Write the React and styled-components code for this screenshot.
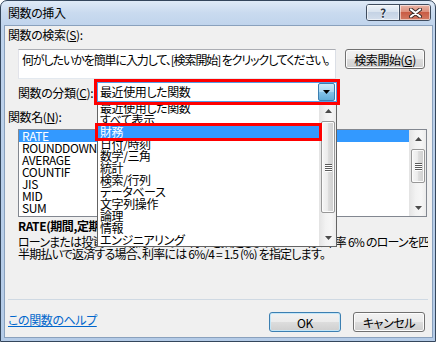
import React from "react";
import styled, { createGlobalStyle, css } from "styled-components";

const GlobalStyle = createGlobalStyle`
  html, body { margin: 0; padding: 0; background: #fff; }
  body {
    font-family: "Noto Sans CJK JP", "Noto Sans", sans-serif;
    font-size: 12px;
    color: #000;
    font-feature-settings: "palt";
    letter-spacing: -0.4px;
  }
  * { box-sizing: border-box; }
`;

const Window = styled.div`
  width: 436px;
  height: 342px;
  border: 1px solid #34465c;
  border-radius: 7px 7px 0 0;
  background: linear-gradient(180deg, #dfeaf7 0px, #c9daef 12px, #bfd3ec 26px, #b4cbe7 100%);
  padding: 0 2px 3px 3px;
  display: flex;
  flex-direction: column;
  overflow: hidden;
`;

const TitleBar = styled.div`
  height: 24px;
  flex: none;
  display: flex;
  align-items: flex-start;
  justify-content: space-between;
  padding: 3px 2px 0 4px;
`;

const Title = styled.div`
  line-height: 18px;
  white-space: nowrap;
`;

const CaptionGroup = styled.div`
  display: flex;
  height: 17px;
  border: 1px solid #3f4c5e;
  border-radius: 3px;
  overflow: hidden;
`;

const CaptionButton = styled.div`
  width: ${(p) => p.$w}px;
  height: 100%;
  display: flex;
  align-items: center;
  justify-content: center;
  box-shadow: inset 0 0 0 1px rgba(255, 255, 255, 0.55);
  font-weight: bold;
  font-size: 12px;
  line-height: 15px;
  color: #2c3849;
  text-shadow: 0 0 1px #fff, 0 1px 0 #fff;
  ${(p) =>
    p.$kind === "close"
      ? css`
          background: linear-gradient(180deg, #eab5a7 0%, #dc8f7c 45%, #c95c45 50%, #d27a63 100%);
          border-left: 1px solid #3f4c5e;
        `
      : css`
          background: linear-gradient(180deg, #eef3f9 0%, #d9e3ef 45%, #c5d3e5 50%, #d3deec 100%);
        `}
`;

const Client = styled.div`
  flex: 1;
  border: 1px solid #8aa1bd;
  background: #f0f0f0;
  padding: 2px 4px 5px 3px;
  display: flex;
  flex-direction: column;
  min-height: 0;
`;

const Label = styled.div`
  line-height: 13px;
  white-space: nowrap;
  flex: none;
  margin-top: ${(p) => p.$mt || 0}px;
  width: ${(p) => (p.$w ? `${p.$w}px` : "auto")};
`;

const SearchRow = styled.div`
  display: flex;
  align-items: flex-start;
  gap: 9px;
  margin: 8px 0 0 10px;
`;

const SearchBox = styled.div`
  width: 318px;
  height: 30px;
  border: 1px solid #abadb3;
  border-left-color: #e2e3ea;
  border-right-color: #dbdfe6;
  border-bottom-color: #e3e9ef;
  background: #fff;
  padding: 3px 3px;
  line-height: 13px;
  letter-spacing: -1.1px;
  white-space: nowrap;
  overflow: hidden;
`;

const Button = styled.div`
  width: ${(p) => p.$w}px;
  height: 20px;
  flex: none;
  border: 1px solid ${(p) => (p.$default ? "#3c7fb1" : "#707070")};
  border-radius: 3px;
  background: linear-gradient(180deg, #f2f2f2 0%, #ebebeb 50%, #dddddd 50%, #cfcfcf 100%);
  box-shadow: inset 0 0 0 1px ${(p) => (p.$default ? "#c3e6f8" : "#fcfcfc")};
  display: flex;
  align-items: center;
  justify-content: center;
  line-height: 13px;
  white-space: nowrap;
`;

const CategoryRow = styled.div`
  display: flex;
  align-items: center;
  height: 20px;
  margin: 3px 0 0 10px;
`;

const ComboWrap = styled.div`
  position: relative;
  width: 240px;
  height: 20px;
`;

const Combo = styled.div`
  position: relative;
  z-index: 3;
  height: 20px;
  border: 1px solid #569de5;
  background: #fff;
  display: flex;
  align-items: stretch;
  outline: ${(p) => (p.$marked ? "3px solid #ff0000" : "none")};
`;

const ComboText = styled.div`
  flex: 1;
  padding-left: 2px;
  line-height: 18px;
  white-space: nowrap;
`;

const DropButton = styled.div`
  width: 17px;
  margin: 0 1px 0 0;
  border: 1px solid #3c7fb1;
  border-radius: 2px;
  background: linear-gradient(180deg, #cdeafb 0%, #a9d8f3 48%, #84c3e8 52%, #62acd8 100%);
  display: flex;
  align-items: center;
  justify-content: center;
`;

const DropList = styled.div`
  position: absolute;
  z-index: 2;
  top: 19px;
  left: 0;
  width: 240px;
  height: 146px;
  border: 1px solid #646464;
  background: #fff;
  display: flex;
`;

const Items = styled.div`
  flex: 1;
  display: flex;
  flex-direction: column;
  min-width: 0;
`;

const Item = styled.div`
  height: 12px;
  line-height: 12px;
  padding-left: ${(p) => p.$pad}px;
  white-space: nowrap;
  flex: none;
  ${(p) =>
    p.$selected &&
    css`
      background: #3399ff;
      color: #fff;
    `}
  ${(p) =>
    p.$marked &&
    css`
      position: relative;
      z-index: 1;
      outline: 3px solid #ff0000;
    `}
`;

const FuncList = styled.div`
  margin: 6px 1px 0 10px;
  height: 88px;
  flex: none;
  border: 1px solid #828790;
  background: #fff;
  display: flex;
`;

const ScrollBar = styled.div`
  width: 17px;
  flex: none;
  display: flex;
  flex-direction: column;
  background: linear-gradient(90deg, #e6e6e6 0%, #f2f2f2 35%, #f6f6f6 70%, #ececec 100%);
  border-left: 1px solid #e4e4e4;
`;

const ScrollArrow = styled.div`
  height: 17px;
  flex: none;
  display: flex;
  align-items: center;
  justify-content: center;
`;

const ScrollTrack = styled.div`
  flex: 1;
  display: flex;
  flex-direction: column;
  padding: 0 1px;
`;

const Thumb = styled.div`
  margin-top: ${(p) => p.$offset}px;
  height: ${(p) => p.$size}px;
  border: 1px solid #979797;
  border-radius: 2px;
  background: linear-gradient(90deg, #f6f6f6 0%, #ececec 45%, #dcdcdc 55%, #cfcfcf 100%);
  box-shadow: inset 0 0 0 1px #fbfbfb;
  display: flex;
  flex-direction: column;
  align-items: center;
  justify-content: center;
  gap: 1px;
`;

const Grip = styled.div`
  width: 7px;
  height: 1px;
  background: #5a5a5a;
  box-shadow: 0 1px 0 #ffffff;
`;

const Desc = styled.div`
  margin: 2px 0 0 10px;
  white-space: nowrap;
  overflow: hidden;
`;

const DescTitle = styled.div`
  line-height: 13px;
  font-weight: bold;
`;

const DescBody = styled.div`
  margin-top: 4px;
  line-height: 12px;
  letter-spacing: -0.8px;
`;

const Spacer = styled.div`
  flex: 1;
`;

const Separator = styled.div`
  height: 1px;
  flex: none;
  background: #cfd9e3;
`;

const Footer = styled.div`
  margin-top: 12px;
  height: 20px;
  flex: none;
  display: flex;
  align-items: flex-start;
  justify-content: space-between;
  padding-right: 3px;
`;

const HelpLink = styled.a`
  margin-top: 1px;
  line-height: 13px;
  color: #0066cc;
  text-decoration: underline;
  white-space: nowrap;
`;

const FooterButtons = styled.div`
  display: flex;
  gap: 12px;
`;

const Arrow = ({ up }) => (
  <svg width="7" height="4" viewBox="0 0 7 4">
    <polygon points={up ? "3.5,0 7,4 0,4" : "0,0 7,0 3.5,4"} fill="#4a4a4a" />
  </svg>
);

const Scroll = ({ offset, size }) => (
  <ScrollBar>
    <ScrollArrow>
      <Arrow up />
    </ScrollArrow>
    <ScrollTrack>
      <Thumb $offset={offset} $size={size}>
        <Grip />
        <Grip />
        <Grip />
        <Grip />
      </Thumb>
    </ScrollTrack>
    <ScrollArrow>
      <Arrow />
    </ScrollArrow>
  </ScrollBar>
);

const categories = [
  "最近使用した関数",
  "すべて表示",
  "財務",
  "日付/時刻",
  "数学/三角",
  "統計",
  "検索/行列",
  "データベース",
  "文字列操作",
  "論理",
  "情報",
  "エンジニアリング",
];

const functions = ["RATE", "ROUNDDOWN", "AVERAGE", "COUNTIF", "JIS", "MID", "SUM"];

export default function App() {
  return (
    <>
      <GlobalStyle />
      <Window>
        <TitleBar>
          <Title>関数の挿入</Title>
          <CaptionGroup>
            <CaptionButton $kind="help" $w={32}>?</CaptionButton>
            <CaptionButton $kind="close" $w={31}>
              <svg width="13" height="10" viewBox="0 0 13 10">
                <path d="M2 1.5 L11 8.5 M11 1.5 L2 8.5" stroke="#3a2a28" strokeWidth="4" strokeLinecap="round" />
                <path d="M2 1.5 L11 8.5 M11 1.5 L2 8.5" stroke="#ffffff" strokeWidth="2.2" strokeLinecap="round" />
              </svg>
            </CaptionButton>
          </CaptionGroup>
        </TitleBar>
        <Client>
          <Label>
            関数の検索(<u>S</u>):
          </Label>
          <SearchRow>
            <SearchBox>何がしたいかを簡単に入力して、[検索開始] をクリックしてください。</SearchBox>
            <Button $w={80}>
              検索開始(<u>G</u>)
            </Button>
          </SearchRow>
          <CategoryRow>
            <Label $w={79}>
              関数の分類(<u>C</u>):
            </Label>
            <ComboWrap>
              <Combo $marked>
                <ComboText>最近使用した関数</ComboText>
                <DropButton>
                  <svg width="7" height="4" viewBox="0 0 7 4">
                    <polygon points="0,0 7,0 3.5,4" fill="#000" />
                  </svg>
                </DropButton>
              </Combo>
              <DropList>
                <Items>
                  {categories.map((c, i) => (
                    <Item key={c} $pad={2} $selected={i === 2} $marked={i === 2}>
                      {c}
                    </Item>
                  ))}
                </Items>
                <Scroll offset={2} size={92} />
              </DropList>
            </ComboWrap>
          </CategoryRow>
          <Label $mt={8}>
            関数名(<u>N</u>):
          </Label>
          <FuncList>
            <Items>
              {functions.map((f, i) => (
                <Item key={f} $pad={3} $selected={i === 0}>
                  {f}
                </Item>
              ))}
            </Items>
            <Scroll offset={2} size={34} />
          </FuncList>
          <Desc>
            <DescTitle>RATE(期間,定期支払額,現在価値,将来価値,支払期日,推定値)</DescTitle>
            <DescBody>
              ローンまたは投資の 1 期間あたりの利率を指定します。たとえば、年率 6% のローンを四
              <br />
              半期払いで返済する場合、利率には 6%/4 = 1.5 (%) を指定します。
            </DescBody>
          </Desc>
          <Spacer />
          <Separator />
          <Footer>
            <HelpLink>この関数のヘルプ</HelpLink>
            <FooterButtons>
              <Button $w={72} $default>
                OK
              </Button>
              <Button $w={72}>キャンセル</Button>
            </FooterButtons>
          </Footer>
        </Client>
      </Window>
    </>
  );
}
